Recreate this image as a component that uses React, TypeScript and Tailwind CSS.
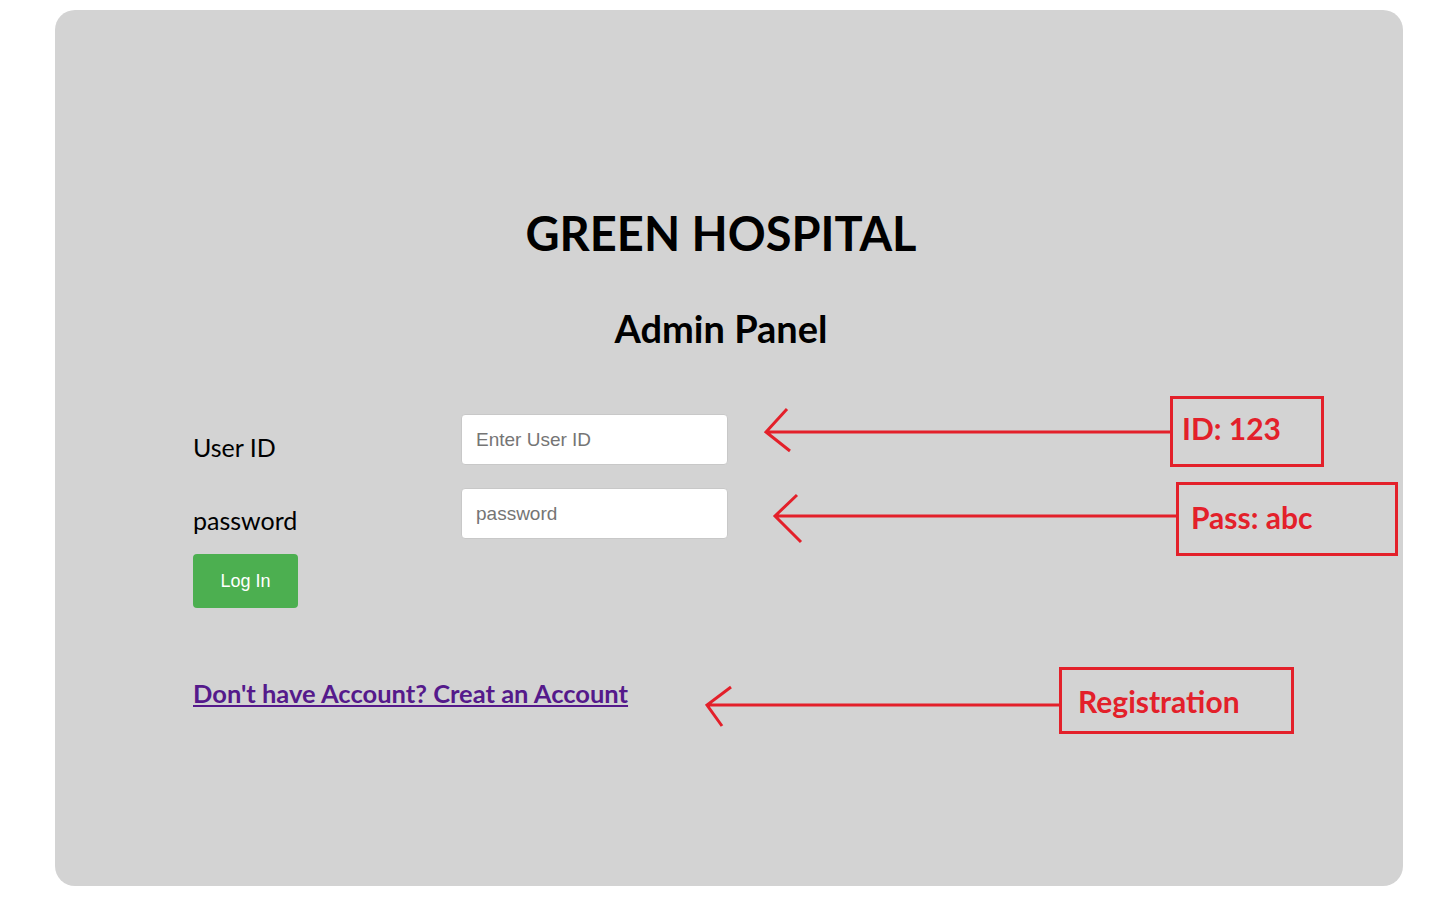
import React from "react";

const calibri = { fontFamily: "Lato, 'Open Sans', sans-serif" };

function Notes() {
  return (
    <>
      {/* red arrows drawn over the panel */}
      <svg
        className="absolute inset-0 pointer-events-none"
        width="1348"
        height="876"
        viewBox="0 0 1348 876"
        fill="none"
        stroke="#e3202a"
        strokeWidth="3"
      >
        <path d="M713 422H1115M732 399L711 422L735 441" />
        <path d="M722 506H1121M742 485L720 506L746 532" />
        <path d="M654 695H1004M676 677L652 695L667 716" />
      </svg>

      <div className="absolute left-[1115px] top-[386px] w-[154px] h-[71px] border-[3px] border-[#e3202a] pl-[9px] pt-[14px] text-[30px] font-bold leading-none text-[#e3202a]">
        ID: 123
      </div>
      <div className="absolute left-[1121px] top-[472px] w-[222px] h-[74px] border-[3px] border-[#e3202a] pl-[12px] pt-[17px] text-[30px] font-bold leading-none text-[#e3202a]">
        Pass: abc
      </div>
      <div className="absolute left-[1004px] top-[657px] w-[235px] h-[67px] border-[3px] border-[#e3202a] pl-[16px] pt-[16px] text-[30px] font-bold leading-none text-[#e3202a]">
        Registration
      </div>
    </>
  );
}

export default function App() {
  return (
    <div className="w-[1431px] h-[902px] bg-white pt-[10px] pl-[55px]" style={calibri}>
      <div className="relative w-[1348px] h-[876px] rounded-[20px] bg-[#d3d3d3] pt-[200px]">
        {/* Heading */}
        <div className="pr-[16px] text-center text-black">
          <h1 className="text-[47px] font-bold leading-none">GREEN HOSPITAL</h1>
          <h2 className="mt-[52px] text-[38px] font-bold leading-none">Admin Panel</h2>
        </div>

        {/* Login form */}
        <form className="ml-[138px] mt-[67px]" onSubmit={(e) => e.preventDefault()}>
          <div className="flex">
            <label className="w-[268px] mt-[21px] text-[25px] leading-none text-black">User ID</label>
            <input
              type="text"
              placeholder="Enter User ID"
              className="w-[267px] h-[51px] rounded-[4px] border border-[#c8c8c8] bg-white px-[14px] text-[19px] placeholder:text-[#757575] outline-none"
              style={{ fontFamily: "'Liberation Sans', Arial, sans-serif" }}
            />
          </div>
          <div className="flex mt-[23px]">
            <label className="w-[268px] mt-[20px] text-[25px] leading-none text-black">password</label>
            <input
              type="password"
              placeholder="password"
              className="w-[267px] h-[51px] rounded-[4px] border border-[#c8c8c8] bg-white px-[14px] text-[19px] placeholder:text-[#757575] outline-none"
              style={{ fontFamily: "'Liberation Sans', Arial, sans-serif" }}
            />
          </div>
          <button
            type="submit"
            className="mt-[15px] w-[105px] h-[54px] rounded-[4px] bg-[#4caf50] text-[18px] text-white"
            style={{ fontFamily: "'Liberation Sans', Arial, sans-serif" }}
          >
            Log In
          </button>
        </form>

        <a href="#" className="block ml-[138px] mt-[73px] w-max text-[25.5px] font-bold leading-none text-[#551a8b] underline">
          Don't have Account? Creat an Account
        </a>

        <Notes />
      </div>
    </div>
  );
}
